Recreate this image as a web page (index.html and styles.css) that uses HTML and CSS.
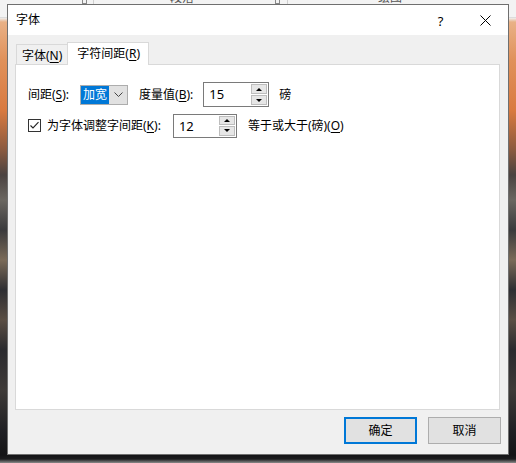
FILE: index.html
```html
<!DOCTYPE html>
<html lang="zh-CN">
<head>
<meta charset="utf-8">
<title>字体</title>
<link rel="stylesheet" href="styles.css">
</head>
<body>
<div class="desktop">
  <div class="ribbon">
    <span class="rb-mark m1"></span>
    <span class="rb-sep s1"></span>
    <span class="rb-label l1">段落</span>
    <span class="rb-mark m2"></span>
    <span class="rb-sep s2"></span>
    <span class="rb-label l2">绘图</span>
  </div>
  <div class="window">
    <div class="titlebar">
      <span class="title">字体</span>
      <span class="tb-btn help">?</span>
      <span class="tb-btn close">
        <svg width="11" height="11" viewBox="0 0 11 11"><path d="M0.5 0.5 L10.5 10.5 M10.5 0.5 L0.5 10.5" stroke="#000" stroke-width="1" fill="none"/></svg>
      </span>
    </div>
    <div class="body">
      <div class="tabs">
        <div class="tab">字体(<u>N</u>)</div>
        <div class="tab active">字符间距(<u>R</u>)</div>
      </div>
      <div class="panel">
        <div class="row row1">
          <span class="lbl">间距(<u>S</u>):</span>
          <div class="combo">
            <span class="sel">加宽</span>
            <span class="chev"><svg width="9" height="5" viewBox="0 0 9 5"><path d="M0.5 0.5 L4.5 4.5 L8.5 0.5" stroke="#444" stroke-width="1" fill="none"/></svg></span>
          </div>
          <span class="lbl gap11">度量值(<u>B</u>):</span>
          <div class="spin spin1">
            <span class="val">15</span>
            <span class="arrows"><span class="arrow"><i class="up"></i></span><span class="arrow"><i class="down"></i></span></span>
          </div>
          <span class="lbl unit">磅</span>
        </div>
        <div class="row row2">
          <span class="check"><svg width="13" height="13" viewBox="0 0 13 13"><rect x="0.5" y="0.5" width="12" height="12" fill="#fff" stroke="#333"/><path d="M2.5 6.5 L5 9 L10.5 3.2" stroke="#222" stroke-width="1.1" fill="none"/></svg></span>
          <span class="lbl chk-lbl">为字体调整字间距(<u>K</u>):</span>
          <div class="spin spin2">
            <span class="val">12</span>
            <span class="arrows"><span class="arrow"><i class="up"></i></span><span class="arrow"><i class="down"></i></span></span>
          </div>
          <span class="lbl gap11">等于或大于(磅)(<u>O</u>)</span>
        </div>
      </div>
      <div class="buttons">
        <div class="btn default">确定</div>
        <div class="btn">取消</div>
      </div>
    </div>
  </div>
</div>
</body>
</html>
```
FILE: styles.css
```css
* { box-sizing: border-box; }
html, body { margin: 0; padding: 0; }
body {
  font-family: "Noto Sans", "Noto Sans CJK SC", sans-serif;
  font-size: 12px;
  color: #000;
}
u { text-decoration: underline; text-underline-offset: 2px; }

.desktop {
  position: relative;
  width: 516px;
  height: 463px;
  overflow: hidden;
  background:
    linear-gradient(to bottom,
      #eeeeee 0px, #eeeeee 18px,
      #e9b186 22px, #e0915a 60px, #d97a40 110px,
      #8a5a40 150px, #4a4240 175px, #6a6660 200px,
      #3a3a3c 230px, #7a6a58 260px, #2e2e32 290px,
      #5a4e44 320px, #2a2a2e 350px, #3e3a38 390px,
      #202024 430px, #141416 455px, #1c1c1e 459px, #8a8a8a 463px);
}

.ribbon {
  height: 18px;
  background: #f3f3f3;
  position: relative;
  border-bottom: 1px solid #dcdcdc;
}
.rb-label {
  position: absolute;
  top: -9px;
  font-size: 12px;
  line-height: 14px;
  color: #555;
}
.l1 { left: 170px; }
.l2 { left: 378px; }
.rb-sep {
  position: absolute;
  top: 0;
  width: 1px;
  height: 18px;
  background: #cfcfcf;
}
.s1 { left: 93px; }
.s2 { left: 287px; }
.rb-mark {
  position: absolute;
  top: 0;
  width: 5px;
  height: 4px;
  border: 1px solid #888;
  border-top: none;
}
.m1 { left: 82px; }
.m2 { left: 275px; }

.window {
  position: absolute;
  left: 7px;
  top: 4px;
  width: 502px;
  height: 451px;
  border: 1px solid #6f6f6f;
  background: #f0f0f0;
  display: flex;
  flex-direction: column;
}

.titlebar {
  height: 30px;
  flex: none;
  background: #fff;
  display: flex;
  align-items: center;
  padding-left: 8px;
}
.title { flex: 1; font-size: 12px; line-height: 16px; }
.tb-btn {
  width: 45px;
  height: 30px;
  display: flex;
  align-items: center;
  justify-content: center;
}
.help { font-size: 13px; font-family: "Noto Sans", sans-serif; padding-top: 1px; }

.body {
  flex: 1;
  display: flex;
  flex-direction: column;
  padding: 7px 8px 0 7px;
}

.tabs {
  height: 22px;
  display: flex;
  align-items: flex-end;
  padding-left: 1px;
  position: relative;
  z-index: 1;
}
.tab {
  height: 20px;
  border: 1px solid #d9d9d9;
  border-bottom: none;
  border-right: none;
  background: #f0f0f0;
  padding: 0 5px;
  line-height: 20px;
  padding-top: 1px;
}
.tab.active {
  height: 23px;
  margin-bottom: -1px;
  background: #fff;
  border-right: 1px solid #d9d9d9;
  padding: 0 8px 0 9px;
  line-height: 22px;
}

.panel {
  height: 346px;
  flex: none;
  background: #fff;
  border: 1px solid #d9d9d9;
  padding: 17px 12px 0 12px;
}

.row {
  display: flex;
  align-items: center;
}
.row1 { height: 25px; }
.row2 { height: 25px; margin-top: 6px; }

.lbl { line-height: 16px; white-space: nowrap; }
.gap11 { margin-left: 11px; }
.unit { margin-left: 10px; }

.combo {
  margin-left: 11px;
  width: 48px;
  height: 20px;
  display: flex;
  border: 1px solid #adadad;
  background: #e1e1e1;
}
.sel {
  width: 28px;
  background: #0078d7;
  color: #fff;
  line-height: 18px;
  text-align: center;
}
.chev {
  flex: 1;
  display: flex;
  align-items: center;
  justify-content: center;
}

.spin {
  width: 66px;
  height: 25px;
  border: 1px solid #7a7a7a;
  background: #fff;
  display: flex;
  align-items: stretch;
}
.spin1 { margin-left: 10px; }
.spin2 { margin-left: 12px; width: 64px; height: 24px; }
.val {
  flex: 1;
  padding-left: 5px;
  font-size: 13px;
  line-height: 23px;
}
.arrows {
  width: 17px;
  display: flex;
  flex-direction: column;
  gap: 1px;
  padding: 1px 1px 1px 0;
}
.arrow {
  flex: 1;
  background: #e6e6e6;
  border: 1px solid #bdbdbd;
  display: flex;
  align-items: center;
  justify-content: center;
}
.up, .down {
  width: 0;
  height: 0;
  border-left: 3px solid transparent;
  border-right: 3px solid transparent;
}
.up { border-bottom: 3px solid #000; }
.down { border-top: 3px solid #000; }

.check { width: 13px; height: 13px; display: flex; }
.chk-lbl { margin-left: 6px; }

.buttons {
  margin-top: 7px;
  margin-right: -1px;
  display: flex;
  justify-content: flex-end;
  gap: 11px;
}
.btn {
  width: 73px;
  height: 27px;
  background: #e1e1e1;
  border: 1px solid #adadad;
  display: flex;
  align-items: center;
  justify-content: center;
  line-height: 16px;
}
.btn.default { border: 2px solid #0078d7; }
```
